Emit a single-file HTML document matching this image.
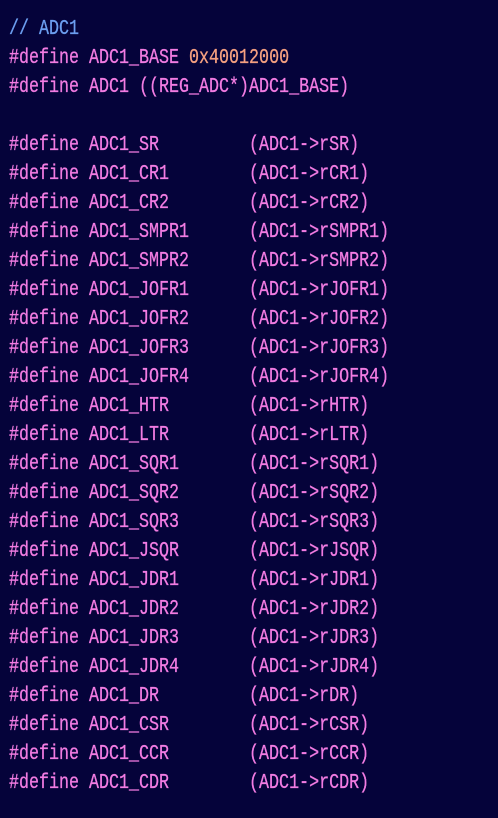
<!DOCTYPE html>
<html><head><meta charset="utf-8"><style>
html,body{margin:0;padding:0;background:#05033a;width:498px;height:818px;overflow:hidden}
pre{margin:0;position:absolute;left:9px;top:15px;font-family:"Liberation Mono",monospace;font-size:21px;line-height:29px;color:#f27ce2;transform:scaleX(0.7937);transform-origin:0 0;white-space:pre;-webkit-text-stroke:0.3px currentColor}
.c{color:#6c9ef0}.n{color:#f5a080}
</style></head><body><pre><span class="c">// ADC1</span>
#define ADC1_BASE <span class="n">0x40012000</span>
#define ADC1 ((REG_ADC*)ADC1_BASE)

#define ADC1_SR         (ADC1->rSR)
#define ADC1_CR1        (ADC1->rCR1)
#define ADC1_CR2        (ADC1->rCR2)
#define ADC1_SMPR1      (ADC1->rSMPR1)
#define ADC1_SMPR2      (ADC1->rSMPR2)
#define ADC1_JOFR1      (ADC1->rJOFR1)
#define ADC1_JOFR2      (ADC1->rJOFR2)
#define ADC1_JOFR3      (ADC1->rJOFR3)
#define ADC1_JOFR4      (ADC1->rJOFR4)
#define ADC1_HTR        (ADC1->rHTR)
#define ADC1_LTR        (ADC1->rLTR)
#define ADC1_SQR1       (ADC1->rSQR1)
#define ADC1_SQR2       (ADC1->rSQR2)
#define ADC1_SQR3       (ADC1->rSQR3)
#define ADC1_JSQR       (ADC1->rJSQR)
#define ADC1_JDR1       (ADC1->rJDR1)
#define ADC1_JDR2       (ADC1->rJDR2)
#define ADC1_JDR3       (ADC1->rJDR3)
#define ADC1_JDR4       (ADC1->rJDR4)
#define ADC1_DR         (ADC1->rDR)
#define ADC1_CSR        (ADC1->rCSR)
#define ADC1_CCR        (ADC1->rCCR)
#define ADC1_CDR        (ADC1->rCDR)</pre></body></html>
